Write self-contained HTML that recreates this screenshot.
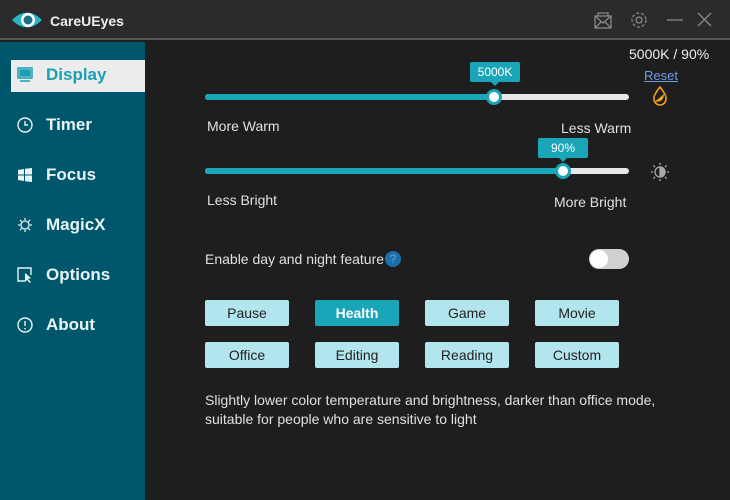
<!DOCTYPE html><html><head><style>
*{margin:0;padding:0;box-sizing:border-box}
body{width:730px;height:500px;background:#1e1e1e;font-family:"Liberation Sans",sans-serif;position:relative;overflow:hidden;color:#e6e6e6}
.a{position:absolute}
.tb{left:0;top:0;width:730px;height:40px;background:#2b2b2b;border-bottom:2px solid #555}
.sb{left:0;top:42px;width:145px;height:458px;background:#00566a}
.nav{left:46px;font-size:17px;font-weight:bold;color:#e8f4f6}
.ic{left:17px;width:16px;height:16px}
.track{height:6px;border-radius:3px;background:#e8e8e8}
.fill{height:6px;border-radius:3px;background:#1ba5b8}
.thumb{width:16px;height:16px;border-radius:50%;background:#fff;border:3px solid #1ba5b8}
.tip{background:#1ba5b8;color:#fff;font-size:12px;text-align:center;line-height:20px;border-radius:2px}
.lbl{font-size:14px;color:#e0e0e0}
.btn{width:84px;height:26px;background:#b3e5ef;border-radius:2px;color:#222;font-size:14px;text-align:center;line-height:26px}
</style></head><body>
<div class="a tb"></div>
<svg class="a" style="left:11px;top:9px" width="32" height="22" viewBox="0 0 32 22"><path d="M1 11 Q16 -4 31 11 Q16 26 1 11Z" fill="#2bb3c6"/><circle cx="17" cy="11" r="7" fill="#fff"/><circle cx="17" cy="11" r="4.5" fill="#1a6f80"/></svg>
<div class="a" style="left:50px;top:13px;font-size:14px;font-weight:bold;color:#eee">CareUEyes</div>
<svg class="a" style="left:594px;top:12px" width="120" height="18" viewBox="0 0 120 18" fill="none" stroke="#888" stroke-width="1.3"><rect x="1" y="4" width="16" height="12"/><path d="M1 4 L9 11 L17 4 M1 16 L7 10 M17 16 L11 10 M4 4 V1 H14 V4"/><circle cx="45" cy="8" r="3"/><circle cx="45" cy="8" r="7" stroke-dasharray="3 2"/><path d="M73 8 H89"/><path d="M111 1 L124 14 M124 1 L111 14" transform="translate(-7,0)"/></svg>
<div class="a sb"></div>
<div class="a" style="left:11px;top:60px;width:134px;height:32px;background:#ececec"></div>
<svg class="a ic" style="top:67px" viewBox="0 0 16 16" fill="none" stroke="#1b9fb3" stroke-width="1.5"><rect x="1" y="1" width="14" height="10"/><rect x="3" y="3" width="10" height="6" fill="#1b9fb3"/><path d="M3 14 H13"/></svg>
<div class="a nav" style="top:65px;color:#1b9fb3">Display</div>
<svg class="a ic" style="top:117px" viewBox="0 0 16 16" fill="none" stroke="#e8f4f6" stroke-width="1.4"><circle cx="8" cy="8" r="7"/><path d="M8 4 V8 H11"/></svg>
<div class="a nav" style="top:115px">Timer</div>
<svg class="a ic" style="top:167px" viewBox="0 0 16 16" fill="#e8f4f6"><path d="M1 3 L7 2 V7.5 H1Z M8 1.8 L15 1 V7.5 H8Z M1 8.5 H7 V14 L1 13Z M8 8.5 H15 V15 L8 14.2Z"/></svg>
<div class="a nav" style="top:165px">Focus</div>
<svg class="a ic" style="top:217px" viewBox="0 0 16 16" fill="none" stroke="#e8f4f6" stroke-width="1.3"><circle cx="8" cy="8" r="4"/><path d="M8 1V3M8 13V15M1 8H3M13 8H15M3 3L4.5 4.5M11.5 11.5L13 13M13 3L11.5 4.5M3 13L4.5 11.5"/></svg>
<div class="a nav" style="top:215px">MagicX</div>
<svg class="a ic" style="top:267px" viewBox="0 0 16 16" fill="none" stroke="#e8f4f6" stroke-width="1.4"><path d="M8 14H1V1H14V8"/><path d="M8 6 L8 15 L10 13 L13 16 L14 15 L11 12 L14 11Z" fill="#e8f4f6" stroke="none"/></svg>
<div class="a nav" style="top:265px">Options</div>
<svg class="a ic" style="top:317px" viewBox="0 0 16 16" fill="none" stroke="#e8f4f6" stroke-width="1.4"><circle cx="8" cy="8" r="7"/><path d="M8 4V9M8 11V12.5"/></svg>
<div class="a nav" style="top:315px">About</div>
<div class="a" style="left:629px;top:46px;font-size:14px;color:#eee">5000K / 90%</div>
<div class="a" style="left:644px;top:68px;font-size:13px;color:#6f9be6;text-decoration:underline">Reset</div>
<svg class="a" style="left:652px;top:86px" width="16" height="20" viewBox="0 0 16 20" fill="none" stroke="#f0a020" stroke-width="1.6"><path d="M8 1 Q15 10 14 13 A6 6 0 0 1 2 13 Q1 10 8 1Z"/><path d="M5 15 Q10 15 11 10 L5 15Z" fill="#f0a020"/></svg>
<svg class="a" style="left:650px;top:162px" width="20" height="20" viewBox="0 0 20 20" fill="none" stroke="#aaa" stroke-width="1.3"><circle cx="10" cy="10" r="5"/><path d="M10 5 A5 5 0 0 1 10 15Z" fill="#aaa"/><path d="M10 1V3M10 17V19M1 10H3M17 10H19M3.5 3.5L5 5M15 15L16.5 16.5M16.5 3.5L15 5M3.5 16.5L5 15"/></svg>
<div class="a track" style="left:205px;top:94px;width:424px"></div>
<div class="a fill" style="left:205px;top:94px;width:290px"></div>
<div class="a thumb" style="left:486px;top:89px"></div>
<div class="a tip" style="left:470px;top:62px;width:50px">5000K</div>
<div class="a" style="left:490px;top:81px;border:5px solid transparent;border-top-color:#1ba5b8"></div>
<div class="a lbl" style="left:207px;top:118px">More Warm</div>
<div class="a lbl" style="left:561px;top:120px">Less Warm</div>
<div class="a track" style="left:205px;top:168px;width:424px"></div>
<div class="a fill" style="left:205px;top:168px;width:359px"></div>
<div class="a thumb" style="left:555px;top:163px"></div>
<div class="a tip" style="left:538px;top:138px;width:50px">90%</div>
<div class="a" style="left:558px;top:157px;border:5px solid transparent;border-top-color:#1ba5b8"></div>
<div class="a lbl" style="left:207px;top:192px">Less Bright</div>
<div class="a lbl" style="left:554px;top:194px">More Bright</div>
<div class="a lbl" style="left:205px;top:251px">Enable day and night feature</div>
<div class="a" style="left:385px;top:251px;width:16px;height:16px;border-radius:50%;background:#1c6fa8;color:#58a9e0;font-size:12px;text-align:center;line-height:16px">?</div>
<div class="a" style="left:589px;top:249px;width:40px;height:20px;border-radius:10px;background:#d0d0d0"></div>
<div class="a" style="left:590px;top:250px;width:18px;height:18px;border-radius:50%;background:#fff"></div>
<div class="a btn" style="left:205px;top:300px">Pause</div>
<div class="a btn" style="left:315px;top:300px;background:#1ba5b8;color:#fff;font-weight:bold">Health</div>
<div class="a btn" style="left:425px;top:300px">Game</div>
<div class="a btn" style="left:535px;top:300px">Movie</div>
<div class="a btn" style="left:205px;top:342px">Office</div>
<div class="a btn" style="left:315px;top:342px">Editing</div>
<div class="a btn" style="left:425px;top:342px">Reading</div>
<div class="a btn" style="left:535px;top:342px">Custom</div>
<div class="a lbl" style="left:205px;top:391px;line-height:19px;width:480px">Slightly lower color temperature and brightness, darker than office mode, suitable for people who are sensitive to light</div>
</body></html>
